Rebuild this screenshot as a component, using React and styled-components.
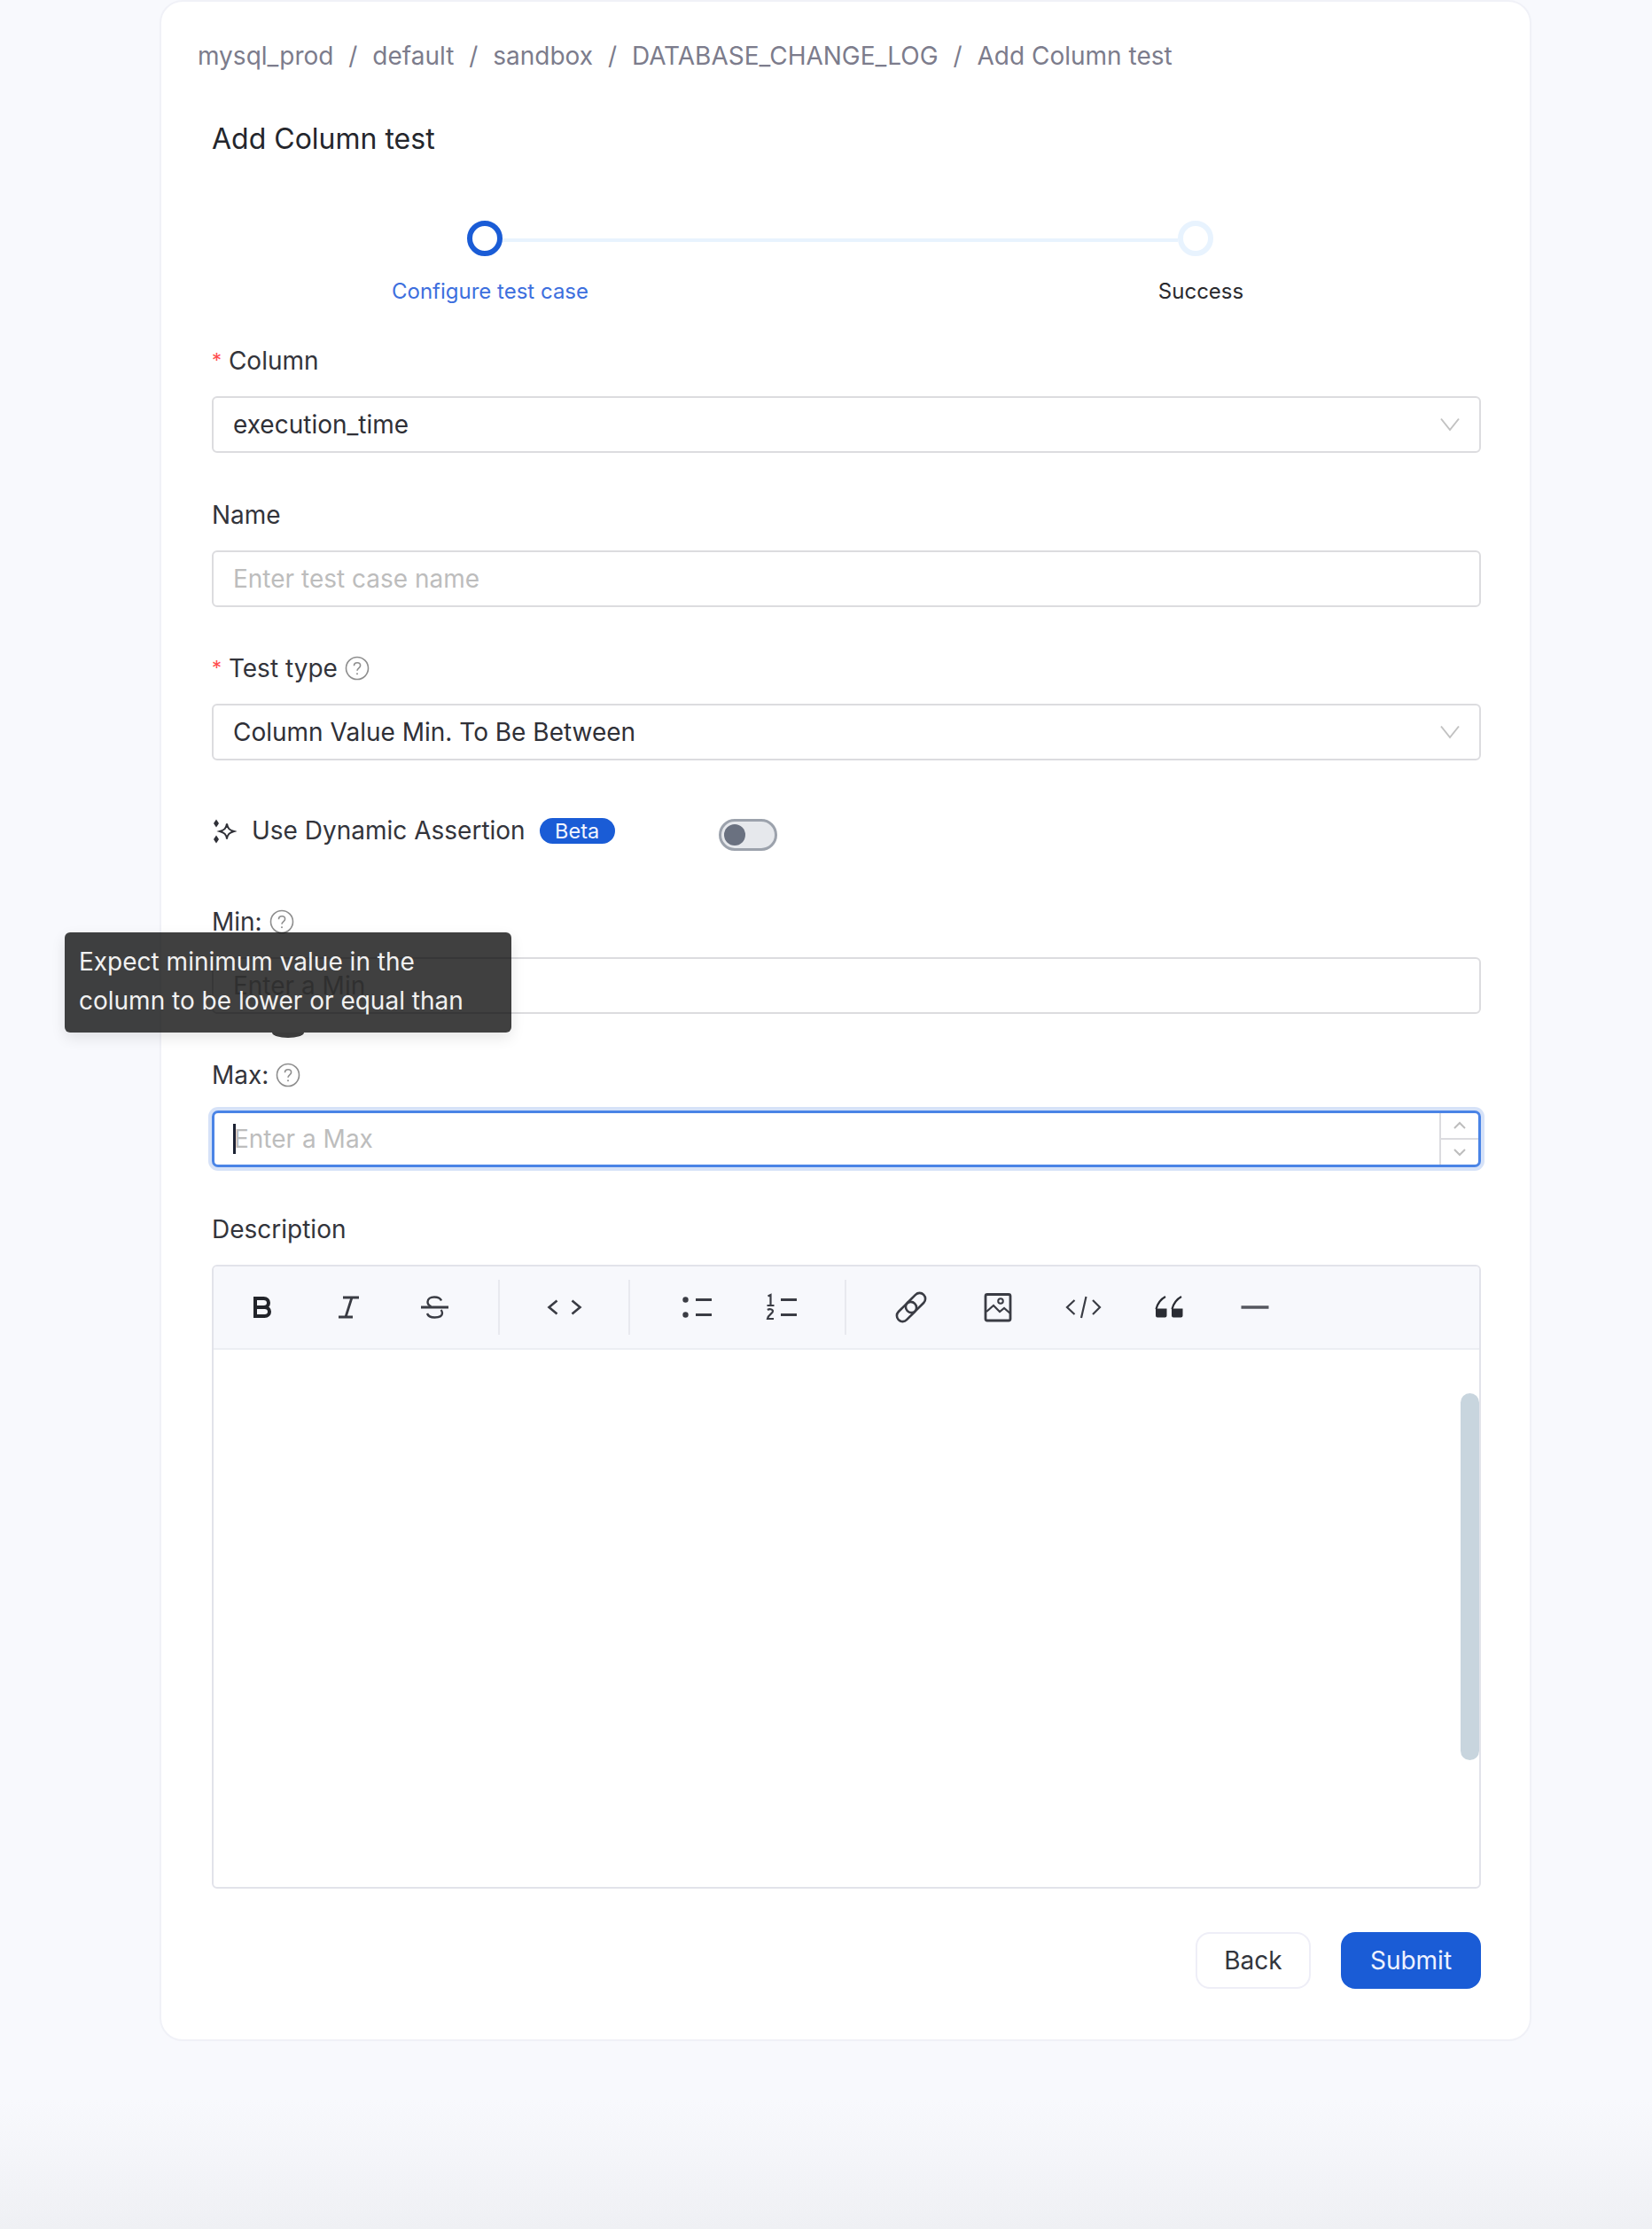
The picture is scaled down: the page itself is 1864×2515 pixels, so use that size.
import React from "react";
import styled, { createGlobalStyle } from "styled-components";

const Global = createGlobalStyle`
  html, body { margin: 0; padding: 0; }
  body {
    font-family: Inter, "Noto Sans", sans-serif;
    font-size: 28px;
    color: #2f3037;
    background: #f8f9fd;
  }
  * { box-sizing: border-box; }
`;

const Page = styled.div`
  width: 1864px;
  height: 2515px;
  padding-left: 180px;
  background: linear-gradient(180deg, #f8f9fd 0, #f8f9fd 2370px, #eff0f4 2515px);
  overflow: hidden;
`;
const Card = styled.main`
  width: 1548px;
  height: 2303px;
  background: #fff;
  border: 2px solid #f0f1f7;
  border-radius: 26px;
  padding: 0 55px 0 41px;
`;
const Crumbs = styled.nav`
  display: flex;
  height: 122px;
  margin-bottom: 2px;
  align-items: center;
  gap: 16.9px;
  color: #7c7c8c;
  line-height: 1;
`;
const Form = styled.div`
  padding-left: 16px;
`;
const Title = styled.h1`
  margin: 0;
  height: 64px;
  line-height: 62px;
  font-size: 32px;
  font-weight: 400;
  color: #24262c;
`;
const Stepper = styled.div`
  display: flex;
  padding-left: 288px;
  margin-top: 59px;
  height: 138px;
`;
const Step = styled.div`
  width: 802px;
  flex: none;
`;
const Track = styled.div`
  display: flex;
  align-items: center;
  height: 40px;
`;
const Dot = styled.span`
  width: 40px;
  height: 40px;
  border-radius: 50%;
  flex: none;
  background: #fff;
  border: 6px solid ${(p) => (p.$active ? "#1a5cd6" : "#e8f3fe")};
`;
const Line = styled.span`
  flex: 1;
  height: 4px;
  margin-top: 4px;
  background: #e8f3fe;
`;
const StepLabel = styled.div`
  width: 300px;
  margin: 23px 0 0 -124px;
  text-align: center;
  line-height: 34px;
  font-size: 24px;
  color: ${(p) => (p.$active ? "#3d6fde" : "#2a2a2e")};
`;
const Field = styled.section`
  position: relative;
  margin-bottom: 49.5px;
`;
const Label = styled.label`
  display: flex;
  align-items: center;
  height: 40px;
  margin-bottom: 20px;
  gap: 8px;
  color: #33343b;
`;
const Star = styled.span`
  color: #ff4d4f;
  font-size: 22px;
  line-height: 1;
  position: relative;
  top: -3px;
`;
const Control = styled.div`
  display: flex;
  align-items: center;
  height: 64px;
  padding: 0 22px;
  background: #fff;
  border: 2px solid #dcdcdf;
  border-radius: 6px;
  color: #2f3037;
`;
const Value = styled.span`
  flex: 1;
`;
const Placeholder = styled.span`
  flex: 1;
  color: #bdbdbd;
`;
const FocusControl = styled.div`
  display: flex;
  align-items: stretch;
  height: 64px;
  background: #fff;
  border: 3px solid #4a84e6;
  border-radius: 7px;
  box-shadow: 0 0 0 4px rgba(26, 92, 214, 0.18);
`;
const FocusText = styled.div`
  flex: 1;
  display: flex;
  align-items: center;
  padding-left: 21px;
`;
const Caret = styled.span`
  width: 3px;
  height: 34px;
  margin-right: -2px;
  background: #1c2233;
  flex: none;
`;
const Spinner = styled.div`
  width: 44px;
  flex: none;
  display: flex;
  flex-direction: column;
  border-left: 2px solid #dcdcdf;
`;
const SpinBtn = styled.div`
  flex: 1;
  display: flex;
  align-items: center;
  justify-content: center;
  & + & { border-top: 2px solid #dcdcdf; }
`;
const DynRow = styled.div`
  display: flex;
  align-items: center;
  height: 50px;
  padding-top: 10px;
  margin-bottom: 62px;
`;
const DynLabel = styled.span`
  margin-left: 17px;
  color: #33343b;
  position: relative;
  top: -1px;
`;
const Beta = styled.span`
  margin-left: 16px;
  width: 85px;
  height: 29px;
  border-radius: 15px;
  background: #1a5cd6;
  color: #f2f5ff;
  font-size: 23.5px;
  line-height: 29px;
  text-align: center;
`;
const Switch = styled.span`
  margin-left: 117px;
  width: 66px;
  height: 36px;
  border-radius: 18px;
  background: #e6e8ec;
  border: 3px solid #9ca2ac;
  display: flex;
  align-items: center;
  padding-left: 3px;
  position: relative;
  top: 4px;
`;
const Knob = styled.span`
  width: 24px;
  height: 24px;
  border-radius: 50%;
  background: #6a7180;
`;
const Tooltip = styled.div`
  position: absolute;
  left: -166px;
  top: 32px;
  width: 504px;
  height: 113px;
  padding: 11px 16px;
  border-radius: 6px;
  background: rgba(0, 0, 0, 0.75);
  color: #f1f1f1;
  font-size: 28px;
  line-height: 44.8px;
  box-shadow: 0 6px 16px rgba(0, 0, 0, 0.1);
  z-index: 2;
  &::after {
    content: "";
    position: absolute;
    left: 234px;
    bottom: -6px;
    width: 36px;
    height: 6px;
    background: rgba(0, 0, 0, 0.75);
    border-radius: 0 0 18px 18px / 0 0 6px 6px;
  }
`;
const Editor = styled.div`
  height: 704px;
  border: 2px solid #e2e3ea;
  border-radius: 6px;
  overflow: hidden;
`;
const Toolbar = styled.div`
  display: flex;
  align-items: center;
  height: 94px;
  padding-left: 6px;
  background: #f7f8fc;
  border-bottom: 2px solid #eceef3;
`;
const ToolButton = styled.span`
  width: 97px;
  height: 48px;
  display: flex;
  align-items: center;
  justify-content: center;
  flex: none;
`;
const Sep = styled.span`
  width: 2px;
  height: 62px;
  margin: 0 24px;
  background: #e8e9ef;
  flex: none;
`;
const EditorBody = styled.div`
  height: 606px;
  display: flex;
  justify-content: flex-end;
  padding: 49px 0 0 0;
`;
const Scrollbar = styled.div`
  width: 21px;
  height: 414px;
  border-radius: 11px;
  background: #c8d5de;
`;
const Actions = styled.div`
  display: flex;
  justify-content: flex-end;
  gap: 34px;
`;
const Button = styled.button`
  height: 64px;
  font: inherit;
  border-radius: 16px;
  width: ${(p) => (p.$primary ? "158px" : "130px")};
  background: ${(p) => (p.$primary ? "#1a5cd6" : "#fff")};
  color: ${(p) => (p.$primary ? "#eef2ff" : "#33363d")};
  border: 2px solid ${(p) => (p.$primary ? "#1a5cd6" : "#eeeef7")};
`;

const Chevron = () => (
  <svg width="22" height="16" viewBox="0 0 22 16" fill="none" stroke="#c2c2c2" strokeWidth="2">
    <path d="M1 1.5 11 14 21 1.5" />
  </svg>
);
const Small = ({ up }) => (
  <svg width="14" height="10" viewBox="0 0 14 10" fill="none" stroke="#bdbdbd" strokeWidth="2">
    <path d={up ? "M1 8 7 2l6 6" : "M1 2l6 6 6-6"} />
  </svg>
);
const Help = () => (
  <svg width="28" height="28" viewBox="0 0 28 28" fill="none" stroke="#8e8e8e" strokeWidth="1.6">
    <circle cx="14" cy="14" r="12.5" />
    <path d="M10.500 11.200c0-2 1.600-3.400 3.600-3.400s3.500 1.300 3.500 3.200c0 2.900-3.600 2.900-3.600 5.800" />
    <circle cx="14" cy="20.200" r="1" fill="#8e8e8e" stroke="none" />
  </svg>
);
const Sparkle = () => (
  <svg width="28" height="30" viewBox="0 0 28 30" fill="none">
    <path d="M17 6.500c.8 5 2.700 7 8 8.500-5.300 1.500-7.200 3.500-8 8.500-.8-5-2.700-7-8-8.500 5.300-1.500 7.200-3.500 8-8.500Z" stroke="#2f3037" strokeWidth="2" />
    <path d="M5 1.500 8 6 5 10.500 2 6Z" fill="#2f3037" />
    <path d="M5 19.500 8 24 5 28.500 2 24Z" fill="#2f3037" />
  </svg>
);

const Ic = ({ children, ...rest }) => (
  <svg width="48" height="48" viewBox="0 0 48 48" fill="none" stroke="#3a3c44" strokeWidth="2.4" {...rest}>
    {children}
  </svg>
);
const icons = {
  bold: (
    <Ic stroke="#22242a" strokeWidth="4">
      <path d="M16 14h9.500c3.500 0 5.500 2 5.500 5s-2 5-5.500 5H16Zm0 10h10.500c3.500 0 5.500 2 5.500 5s-2 5-5.500 5H16Z" />
    </Ic>
  ),
  italic: (
    <Ic strokeWidth="2.8">
      <path d="M18 13h18M13 35h16M28 13l-7 22" />
    </Ic>
  ),
  strike: (
    <Ic>
      <path d="M32 16.500c-1-2.500-4-4-8-4-4.500 0-7.500 2-7.500 5.500 0 2.500 1.500 4 4 5M31.500 27c1 1 1.500 2 1.500 3.500 0 3.500-4 5-8.500 5-4.500 0-7.500-1.500-8.500-4.500" />
      <path d="M9 24h31" strokeWidth="2.800" />
    </Ic>
  ),
  inline: (
    <Ic strokeWidth="2.6">
      <path d="M15.500 16.500 6.500 24l9 7.500M32.500 16.500l9 7.500-9 7.500" />
    </Ic>
  ),
  bullet: (
    <Ic strokeWidth="2.8">
      <circle cx="13.500" cy="15.500" r="3.200" fill="#3a3c44" stroke="none" />
      <circle cx="13.500" cy="32.500" r="3.200" fill="#3a3c44" stroke="none" />
      <path d="M25 15.500h18M25 32.500h18" />
    </Ic>
  ),
  ordered: (
    <Ic strokeWidth="2.2">
      <path d="M9.500 11.500l3-1.500v11.500M8.500 22h8M9 27c2-1.500 6-1 6 1.500S10 32 9 37h7" />
      <path d="M24 15.500h18M24 32.500h18" strokeWidth="2.800" />
    </Ic>
  ),
  link: (
    <Ic strokeWidth="2.6">
      <rect x="6" y="22.500" width="26" height="13" rx="6.500" transform="rotate(-45 19 29)" />
      <rect x="16" y="12.500" width="26" height="13" rx="6.500" transform="rotate(-45 29 19)" />
    </Ic>
  ),
  image: (
    <Ic strokeWidth="2.800">
      <rect x="11" y="9.500" width="28" height="29.500" rx="2" />
      <path d="M12 29l8-7 7 7 5-4 7 6" strokeWidth="2.200" />
      <circle cx="28" cy="17" r="2.800" strokeWidth="2" />
    </Ic>
  ),
  code: (
    <Ic strokeWidth="2.200">
      <path d="M14.500 16 6 24l8.500 8M35 16l8 8-8 8M27.500 12l-5.500 24" />
    </Ic>
  ),
  quote: (
    <Ic stroke="#2a2c33" strokeWidth="2.200">
      <path d="M20 12c-5.500 3-9 8-10.500 14M38 12c-5.500 3-9 8-10.500 14" />
      <path d="M9 25.500h12.500v8a2 2 0 0 1-2 2H11a2 2 0 0 1-2-2ZM27 25.500h12.500v8a2 2 0 0 1-2 2H29a2 2 0 0 1-2-2Z" fill="#2a2c33" stroke="none" />
    </Ic>
  ),
  hr: (
    <Ic stroke="#55575f" strokeWidth="3.400">
      <path d="M8.500 24h31" />
    </Ic>
  ),
};

const groups = [
  ["bold", "italic", "strike"],
  ["inline"],
  ["bullet", "ordered"],
  ["link", "image", "code", "quote", "hr"],
];

export default function App() {
  return (
    <Page>
      <Global />
      <Card>
        <Crumbs>
          <span>mysql_prod</span><span>/</span>
          <span>default</span><span>/</span>
          <span>sandbox</span><span>/</span>
          <span>DATABASE_CHANGE_LOG</span><span>/</span>
          <span>Add Column test</span>
        </Crumbs>
        <Form>
          <Title>Add Column test</Title>
          <Stepper>
            <Step>
              <Track><Dot $active /><Line /></Track>
              <StepLabel $active>Configure test case</StepLabel>
            </Step>
            <Step>
              <Track><Dot /></Track>
              <StepLabel>Success</StepLabel>
            </Step>
          </Stepper>

          <Field>
            <Label><span><Star>*</Star> Column</span></Label>
            <Control><Value>execution_time</Value><Chevron /></Control>
          </Field>
          <Field>
            <Label>Name</Label>
            <Control><Placeholder>Enter test case name</Placeholder></Control>
          </Field>
          <Field>
            <Label><span><Star>*</Star> Test type</span><Help /></Label>
            <Control><Value>Column Value Min. To Be Between</Value><Chevron /></Control>
          </Field>
          <DynRow>
            <Sparkle />
            <DynLabel>Use Dynamic Assertion</DynLabel>
            <Beta>Beta</Beta>
            <Switch><Knob /></Switch>
          </DynRow>
          <Field>
            <Label>Min: <Help /></Label>
            <Control><Placeholder>Enter a Min</Placeholder></Control>
            <Tooltip>Expect minimum value in the<br />column to be lower or equal than</Tooltip>
          </Field>
          <Field>
            <Label>Max: <Help /></Label>
            <FocusControl>
              <FocusText><Caret /><Placeholder>Enter a Max</Placeholder></FocusText>
              <Spinner>
                <SpinBtn><Small up /></SpinBtn>
                <SpinBtn><Small /></SpinBtn>
              </Spinner>
            </FocusControl>
          </Field>
          <Field>
            <Label>Description</Label>
            <Editor>
              <Toolbar>
                {groups.map((g, i) => (
                  <React.Fragment key={i}>
                    {i > 0 && <Sep />}
                    {g.map((n) => <ToolButton key={n}>{icons[n]}</ToolButton>)}
                  </React.Fragment>
                ))}
              </Toolbar>
              <EditorBody><Scrollbar /></EditorBody>
            </Editor>
          </Field>
          <Actions>
            <Button>Back</Button>
            <Button $primary>Submit</Button>
          </Actions>
        </Form>
      </Card>
    </Page>
  );
}
